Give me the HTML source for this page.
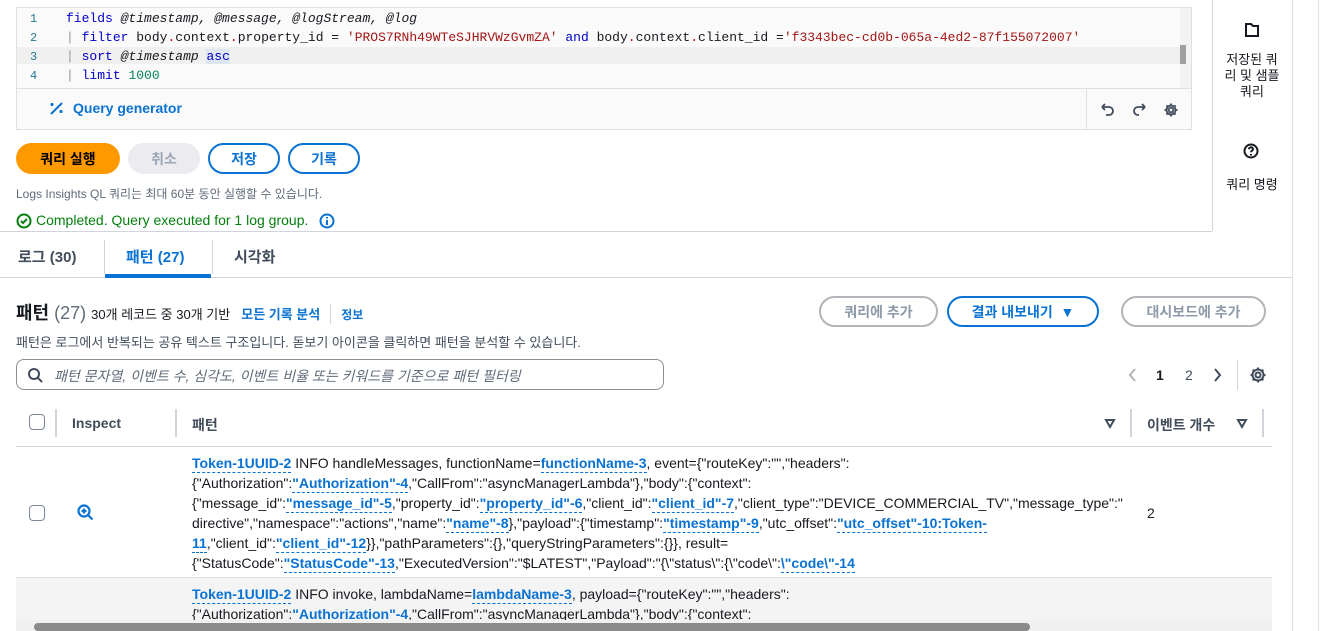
<!DOCTYPE html>
<html><head><meta charset="utf-8"><style>
*{box-sizing:border-box;margin:0;padding:0}
body{width:1332px;height:631px;overflow:hidden;background:#fff;font-family:"Liberation Sans","Noto Sans CJK KR",sans-serif;color:#16191f;position:relative;font-size:14px}
.a{position:absolute;white-space:nowrap}
.mono{font-family:"Liberation Mono",monospace;font-size:13px}
.btn{position:absolute;height:31px;border-radius:16px;font-weight:bold;font-size:14px;display:flex;align-items:center;justify-content:center}
.lk{color:#0972d3;font-weight:bold;border-bottom:1px dashed #0972d3;padding-bottom:1px}
.row{position:absolute;left:192px;font-size:14px;line-height:20px;white-space:nowrap;color:#16191f}
.cb{position:absolute;width:16px;height:16px;border:1.5px solid #7d8998;border-radius:4px;background:#fff}
</style></head><body>
<!-- editor -->
<div class="a" style="left:16px;top:7px;width:1176px;height:123px;border:1px solid #e0e0e0;background:#fafafa"></div>
<div class="a" style="left:17px;top:88px;width:1174px;height:1px;background:#e0e0e0"></div>
<div class="a" style="left:17px;top:47px;width:1163px;height:17px;background:#f0f0f0"></div>
<div class="a" style="left:1180px;top:8px;width:11px;height:80px;background:#f3f3f3"></div>
<div class="a" style="left:1180px;top:45px;width:6px;height:19px;background:#a0a0a0"></div>
<div class="a mono" style="left:30px;top:10px;line-height:19px;color:#237893;font-size:12px">1<br>2<br>3<br>4</div>
<div class="a mono" style="left:66px;top:9px;line-height:19px">
<span style="color:#0000cc">fields</span> <i>@timestamp, @message, @logStream, @log</i><br>
<span style="color:#999">|</span> <span style="color:#0000cc">filter</span> body<span style="color:#c00">.</span>context<span style="color:#c00">.</span>property_id = <span style="color:#a31515">'PROS7RNh49WTeSJHRVWzGvmZA'</span> <span style="color:#0000cc">and</span> body<span style="color:#c00">.</span>context<span style="color:#c00">.</span>client_id =<span style="color:#a31515">'f3343bec-cd0b-065a-4ed2-87f155072007'</span><br>
<span style="color:#999">|</span> <span style="color:#0000cc">sort</span> <i>@timestamp</i> <span style="color:#0000cc;background:#dde6f3">asc</span><br>
<span style="color:#999">|</span> <span style="color:#0000cc">limit</span> <span style="color:#098658">1000</span></div>
<div class="a" style="left:1086px;top:89px;width:1px;height:41px;background:#e0e0e0"></div>
<svg class="a" style="left:49px;top:100px" width="16" height="16" fill="none" stroke="#0972d3" stroke-width="2"><path d="M2 14L13 3M3 3v3M1.5 4.5h3M12 10v3M10.5 11.5h3"/></svg>
<div class="a" style="left:73px;top:100px;color:#0972d3;font-weight:bold;font-size:14px">Query generator</div>
<svg class="a" style="left:1098px;top:101px" width="90" height="18" viewBox="0 0 90 18" fill="none" stroke="#414d5c" stroke-width="1.8"><path d="M4 6h7a4 4 0 010 8H8M4 6l3-3M4 6l3 3"/><path d="M47 6h-7a4 4 0 000 8h1M47 6l-3-3M47 6l-3 3"/><circle cx="73" cy="9" r="2.3"/><path d="M73 2.5v2M73 13.5v2M66.5 9h2M77.5 9h2M68.4 4.4l1.4 1.4M76.2 12.2l1.4 1.4M68.4 13.6l1.4-1.4M76.2 5.8l1.4-1.4"/><circle cx="73" cy="9" r="4.5"/></svg>
<!-- buttons -->
<div class="btn" style="left:16px;top:143px;width:104px;background:#ff9900;color:#000">쿼리 실행</div>
<div class="btn" style="left:128px;top:143px;width:72px;background:#ebebf0;color:#9ba7b6">취소</div>
<div class="btn" style="left:208px;top:143px;width:72px;border:2px solid #0972d3;color:#0972d3">저장</div>
<div class="btn" style="left:288px;top:143px;width:72px;border:2px solid #0972d3;color:#0972d3">기록</div>
<div class="a" style="left:16px;top:185px;font-size:12px;color:#5f6b7a">Logs Insights QL 쿼리는 최대 60분 동안 실행할 수 있습니다.</div>
<svg class="a" style="left:16px;top:213px" width="16" height="16" fill="none" stroke="#037f0c" stroke-width="2"><circle cx="8" cy="8" r="6.5"/><path d="M5 8l2 2 4-4"/></svg>
<div class="a" style="left:36px;top:212px;font-size:14px;color:#037f0c">Completed. Query executed for 1 log group.</div>
<svg class="a" style="left:319px;top:213px" width="16" height="16" fill="none" stroke="#0972d3" stroke-width="2"><circle cx="8" cy="8" r="6.5"/><path d="M8 7v5M8 4v1.5"/></svg>
<div class="a" style="left:0;top:231px;width:1212px;height:1px;background:#d1d5db"></div>
<!-- right panel -->
<div class="a" style="left:1212px;top:0;width:1px;height:231px;background:#d1d5db"></div>
<div class="a" style="left:1292px;top:0;width:1px;height:631px;background:#e0e0e0"></div>
<div class="a" style="left:1318px;top:0;width:1px;height:631px;background:#e0e0e0"></div>
<svg class="a" style="left:1244px;top:22px" width="16" height="16" fill="none" stroke="#16191f" stroke-width="2"><path d="M2 2h5l2 2h5v10H2z"/></svg>
<div class="a" style="left:1212px;top:52px;width:80px;text-align:center;font-size:13px;line-height:16px;white-space:normal">저장된 쿼<br>리 및 샘플<br>쿼리</div>
<svg class="a" style="left:1243px;top:143px" width="16" height="16" fill="none" stroke="#16191f" stroke-width="2"><circle cx="8" cy="8" r="6.5"/><path d="M6 6.2a2 2 0 114 0c0 1.5-2 1.5-2 3M8 11v1.5"/></svg>
<div class="a" style="left:1212px;top:174px;width:80px;text-align:center;font-size:13px">쿼리 명령</div>
<!-- tabs -->
<div class="a" style="left:18px;top:246px;font-size:15px;font-weight:bold;color:#414d5c">로그 (30)</div>
<div class="a" style="left:104px;top:240px;width:1px;height:34px;background:#d1d5db"></div>
<div class="a" style="left:126px;top:246px;font-size:15px;font-weight:bold;color:#0972d3">패턴 (27)</div>
<div class="a" style="left:212px;top:240px;width:1px;height:34px;background:#d1d5db"></div>
<div class="a" style="left:234px;top:246px;font-size:15px;font-weight:bold;color:#414d5c">시각화</div>
<div class="a" style="left:0;top:277px;width:1292px;height:1px;background:#d1d5db"></div>
<div class="a" style="left:105px;top:274px;width:106px;height:4px;background:#0972d3"></div>
<!-- header -->
<div class="a" style="left:16px;top:299px;font-size:18px;font-weight:bold">패턴 <span style="font-weight:normal;color:#5f6b7a">(27)</span> <span style="font-size:13px;font-weight:normal;color:#16191f">30개 레코드 중 30개 기반</span> <span style="font-size:13px;color:#0972d3;margin-left:6px">모든 기록 분석</span><span style="display:inline-block;width:1px;height:20px;background:#d1d5db;margin:0 10px;vertical-align:middle"></span><span style="font-size:12px;color:#0972d3">정보</span></div>
<div class="btn" style="left:819px;top:296px;width:119px;border:2px solid #b4b4bb;color:#8d99a8">쿼리에 추가</div>
<div class="btn" style="left:947px;top:296px;width:152px;border:2px solid #0972d3;color:#0972d3">결과 내보내기 &nbsp;▼</div>
<div class="btn" style="left:1121px;top:296px;width:145px;border:2px solid #b4b4bb;color:#8d99a8">대시보드에 추가</div>
<div class="a" style="left:16px;top:332px;font-size:13px;color:#414d5c">패턴은 로그에서 반복되는 공유 텍스트 구조입니다. 돋보기 아이콘을 클릭하면 패턴을 분석할 수 있습니다.</div>
<div class="a" style="left:16px;top:359px;width:648px;height:31px;border:1px solid #8c8c94;border-radius:8px"></div>
<svg class="a" style="left:27px;top:367px" width="16" height="16" fill="none" stroke="#414d5c" stroke-width="2"><circle cx="7" cy="7" r="5"/><path d="M11 11l4 4"/></svg>
<div class="a" style="left:54px;top:366px;font-size:14px;color:#5f6b7a;font-style:italic">패턴 문자열, 이벤트 수, 심각도, 이벤트 비율 또는 키워드를 기준으로 패턴 필터링</div>
<svg class="a" style="left:1126px;top:367px" width="14" height="16" fill="none" stroke="#b4b4bb" stroke-width="2"><path d="M9 2L4 8l5 6"/></svg>
<div class="a" style="left:1156px;top:367px;font-weight:bold">1</div>
<div class="a" style="left:1185px;top:367px;color:#414d5c">2</div>
<svg class="a" style="left:1210px;top:367px" width="14" height="16" fill="none" stroke="#414d5c" stroke-width="2"><path d="M5 2l5 6-5 6"/></svg>
<div class="a" style="left:1237px;top:360px;width:1px;height:30px;background:#d1d5db"></div>
<svg class="a" style="left:1249px;top:366px" width="18" height="18" fill="none" stroke="#414d5c" stroke-width="2"><circle cx="9" cy="9" r="2.5"/><circle cx="9" cy="9" r="5.5"/><path d="M9 1.5v2M9 14.5v2M1.5 9h2M14.5 9h2M3.7 3.7l1.4 1.4M12.9 12.9l1.4 1.4M3.7 14.3l1.4-1.4M12.9 5.1l1.4-1.4"/></svg>
<!-- table header -->
<div class="cb" style="left:29px;top:414px"></div>
<div class="a" style="left:55px;top:409px;width:2px;height:28px;background:#d1d5db"></div>
<div class="a" style="left:72px;top:415px;font-weight:bold;color:#414d5c">Inspect</div>
<div class="a" style="left:175px;top:409px;width:2px;height:28px;background:#d1d5db"></div>
<div class="a" style="left:192px;top:415px;font-weight:bold;color:#414d5c">패턴</div>
<svg class="a" style="left:1104px;top:417px" width="12" height="12" fill="none" stroke="#414d5c" stroke-width="2"><path d="M2 3h8L6 10z"/></svg>
<div class="a" style="left:1130px;top:409px;width:2px;height:28px;background:#d1d5db"></div>
<div class="a" style="left:1147px;top:415px;font-weight:bold;color:#414d5c">이벤트 개수</div>
<svg class="a" style="left:1236px;top:417px" width="12" height="12" fill="none" stroke="#414d5c" stroke-width="2"><path d="M2 3h8L6 10z"/></svg>
<div class="a" style="left:1262px;top:409px;width:2px;height:28px;background:#d1d5db"></div>
<div class="a" style="left:16px;top:446px;width:1256px;height:1px;background:#d1d5db"></div>
<!-- row1 -->
<div class="cb" style="left:29px;top:505px"></div>
<svg class="a" style="left:77px;top:504px" width="17" height="17" fill="none" stroke="#0972d3" stroke-width="2.2"><circle cx="7" cy="7" r="5.5"/><path d="M11 11l4.5 4.5M7 4.5v5M4.5 7h5"/></svg>
<div class="row" style="top:453px"><span class="lk">Token-1UUID-2</span> INFO handleMessages, functionName=<span class="lk">functionName-3</span>, event={"routeKey":"","headers":<br>{"Authorization":<span class="lk">"Authorization"-4</span>,"CallFrom":"asyncManagerLambda"},"body":{"context":<br>{"message_id":<span class="lk">"message_id"-5</span>,"property_id":<span class="lk">"property_id"-6</span>,"client_id":<span class="lk">"client_id"-7</span>,"client_type":"DEVICE_COMMERCIAL_TV","message_type":"<br>directive","namespace":"actions","name":<span class="lk">"name"-8</span>},"payload":{"timestamp":<span class="lk">"timestamp"-9</span>,"utc_offset":<span class="lk">"utc_offset"-10:Token-</span><br><span class="lk">11</span>,"client_id":<span class="lk">"client_id"-12</span>}},"pathParameters":{},"queryStringParameters":{}}, result=<br>{"StatusCode":<span class="lk">"StatusCode"-13</span>,"ExecutedVersion":"$LATEST","Payload":"{\"status\":{\"code\":<span class="lk">\"code\"-14</span></div>
<div class="a" style="left:1147px;top:505px">2</div>
<div class="a" style="left:16px;top:577px;width:1256px;height:1px;background:#e0e0e0"></div>
<div class="a" style="left:16px;top:578px;width:1256px;height:42px;background:#f4f4f4"></div>
<div class="row" style="top:584px"><span class="lk">Token-1UUID-2</span> INFO invoke, lambdaName=<span class="lk">lambdaName-3</span>, payload={"routeKey":"","headers":<br>{"Authorization":<span class="lk">"Authorization"-4</span>,"CallFrom":"asyncManagerLambda"},"body":{"context":</div>
<!-- hscroll -->
<div class="a" style="left:16px;top:620px;width:1256px;height:11px;background:#f0f0f0"></div>
<div class="a" style="left:34px;top:623px;width:996px;height:8px;border-radius:4px;background:#8a8a8a"></div>
</body></html>
